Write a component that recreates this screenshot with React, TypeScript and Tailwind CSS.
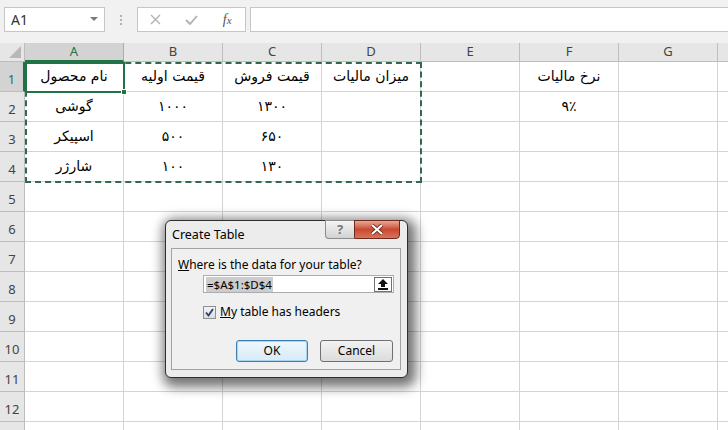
import React from "react";

const COLS = ["A", "B", "C", "D", "E", "F", "G", "H"];

const DATA: Record<number, Record<string, string>> = {
  1: { A: "نام محصول", B: "قیمت اولیه", C: "قیمت فروش", D: "میزان مالیات", F: "نرخ مالیات" },
  2: { A: "گوشی", B: "۱۰۰۰", C: "۱۳۰۰", F: "۹٪" },
  3: { A: "اسپیکر", B: "۵۰۰", C: "۶۵۰" },
  4: { A: "شارژر", B: "۱۰۰", C: "۱۳۰" },
};

const uiFont = { fontFamily: '"Noto Sans", "Open Sans", sans-serif' };
const cellFont = { fontFamily: '"DejaVu Sans", "Noto Sans", sans-serif' };

function FormulaBar() {
  return (
    <div className="flex h-[43px] items-start bg-[#f1f1f1] pt-[7px]" style={uiFont}>
      <div className="ml-[4px] flex h-[25px] w-[101px] items-center justify-between border border-[#c6c6c6] bg-white pl-[6px] pr-[6px]">
        <span className="text-[14px] text-[#333]">A1</span>
        <svg width="8" height="5" viewBox="0 0 8 5">
          <polygon points="0,0 8,0 4,4" fill="#7a7a7a" />
        </svg>
      </div>
      <div className="flex h-[25px] w-[32px] flex-col items-center justify-center gap-[2px]">
        <span className="h-[2px] w-[2px] bg-[#b4b4b4]" />
        <span className="h-[2px] w-[2px] bg-[#b4b4b4]" />
        <span className="h-[2px] w-[2px] bg-[#b4b4b4]" />
      </div>
      <div className="flex h-[25px] w-[109px] items-center border border-[#c6c6c6] bg-white">
        <div className="flex w-[36px] justify-center">
          <svg width="11" height="11" viewBox="0 0 11 11">
            <path d="M1 1 L10 10 M10 1 L1 10" stroke="#b0b0b0" strokeWidth="1.3" />
          </svg>
        </div>
        <div className="flex w-[36px] justify-center">
          <svg width="13" height="10" viewBox="0 0 13 10">
            <path d="M1 5 L5 9 L12 1" stroke="#b0b0b0" strokeWidth="1.8" fill="none" />
          </svg>
        </div>
        <div className="flex w-[36px] justify-center">
          <span
            className="text-[14px] italic text-[#555]"
            style={{ fontFamily: '"Liberation Serif", serif' }}
          >
            f<span className="text-[11px]">x</span>
          </span>
        </div>
      </div>
      <div className="ml-[4px] h-[25px] flex-1 border border-r-0 border-[#c6c6c6] bg-white" />
    </div>
  );
}

function HeaderRow() {
  return (
    <div className="flex h-[19px]" style={uiFont}>
      <div className="flex w-[25px] shrink-0 items-end justify-end border-r border-b border-[#bdbdbd] bg-[#e6e6e6] pb-[3px] pr-[3px]">
        <svg width="12" height="12" viewBox="0 0 12 12">
          <polygon points="12,0 12,12 0,12" fill="#b8b8b8" />
        </svg>
      </div>
      {COLS.map((c) => (
        <div
          key={c}
          className={
            c === "A"
              ? "flex w-[99px] shrink-0 items-center justify-center border-r border-b-2 border-r-[#ababab] border-b-[#217346] bg-[#d3d3d3] text-[13px] text-[#217346]"
              : "flex w-[99px] shrink-0 items-center justify-center border-r border-b border-[#bdbdbd] bg-[#e6e6e6] text-[13px] text-[#444]"
          }
        >
          {c === "H" ? "" : c}
        </div>
      ))}
    </div>
  );
}

function SheetRow({ n }: { n: number }) {
  const row = DATA[n] || {};
  return (
    <div className="flex h-[30px]">
      <div
        className={
          n === 1
            ? "flex w-[25px] shrink-0 items-center justify-center border-r-2 border-b border-r-[#217346] border-b-[#bdbdbd] bg-[#d3d3d3] pt-[6px] text-[13px] text-[#217346]"
            : "flex w-[25px] shrink-0 items-center justify-center border-r border-b border-[#bdbdbd] bg-[#e6e6e6] pt-[6px] text-[13px] text-[#444]"
        }
        style={uiFont}
      >
        {n > 12 ? "" : n}
      </div>
      {COLS.map((c) => (
        <div
          key={c}
          className="flex w-[99px] shrink-0 items-center justify-center border-r border-b border-[#d4d4d4] text-[14px] text-black"
          style={cellFont}
        >
          {row[c] || ""}
        </div>
      ))}
    </div>
  );
}

function CreateTableDialog() {
  return (
    <div
      className="absolute left-[165px] top-[220px] h-[158px] w-[243px] rounded-[6px] border border-[#2e2e2e] bg-[#ececec] shadow-[3px_4px_12px_5px_rgba(0,0,0,0.55)]"
      style={uiFont}
    >
      <div className="absolute right-[7px] top-[-1px] flex h-[19px]">
        <div className="flex w-[29px] items-center justify-center rounded-bl-[4px] border border-r-0 border-[#8c8c8c] bg-linear-to-b from-[#f5f5f5] to-[#d2d2d2] text-[13px] font-bold text-[#777]">
          ?
        </div>
        <div className="flex w-[46px] items-center justify-center rounded-br-[4px] border border-[#6e2a1f] bg-linear-to-b from-[#e8a797] via-[#c9482f] to-[#d9735c]">
          <svg width="14" height="11" viewBox="0 0 14 11">
            <path d="M2 1 L12 10 M12 1 L2 10" stroke="#5a1a10" strokeWidth="3.6" />
            <path d="M2 1 L12 10 M12 1 L2 10" stroke="#ffffff" strokeWidth="2.2" />
          </svg>
        </div>
      </div>
      <div className="flex h-[27px] items-center pl-[6px] pt-[1px] text-[12.5px] text-black">
        Create Table
      </div>
      <div className="ml-[5px] h-[122px] w-[230px] border border-[#a3a3a3] bg-[#f0f0f0] px-[6px] pt-[8px]">
        <div className="h-[16px] text-[12px] leading-[16px] text-black">
          <span className="underline">W</span>here is the data for your table?
        </div>
        <div className="ml-[25px] mt-[2px] flex h-[18px] w-[191px] items-center justify-between border border-[#abadb3] bg-white pl-[2px]">
          <span className="bg-[#cdcdcd] px-[1px] text-[11.5px] leading-[15px] text-black">=$A$1:$D$4</span>
          <div className="mr-[1px] flex h-[15px] w-[18px] items-center justify-center border border-[#707070] bg-white">
            <svg width="10" height="11" viewBox="0 0 10 11">
              <polygon points="5,0 10,5 7,5 7,8 3,8 3,5 0,5" fill="#111" />
              <rect x="0" y="9" width="10" height="2" fill="#111" />
            </svg>
          </div>
        </div>
        <div className="ml-[25px] mt-[12px] flex h-[14px] items-center gap-[4px]">
          <div className="flex h-[13px] w-[13px] items-center justify-center border border-[#8e8f8f] bg-linear-to-b from-[#f2f2f2] to-[#dedede]">
            <svg width="9" height="9" viewBox="0 0 9 9">
              <path d="M1 4.5 L3.5 7.5 L8 1" stroke="#243f78" strokeWidth="1.8" fill="none" />
            </svg>
          </div>
          <span className="text-[12px] text-black">
            <span className="underline">M</span>y table has headers
          </span>
        </div>
        <div className="ml-[58px] mt-[21px] flex gap-[12px]">
          <div className="flex h-[22px] w-[72px] items-center justify-center rounded-[3px] border border-[#3c7fb1] bg-linear-to-b from-[#eef7fc] to-[#d7ebf7] text-[12px] text-black shadow-[inset_0_0_0_1px_#a8d4f0]">
            OK
          </div>
          <div className="flex h-[22px] w-[73px] items-center justify-center rounded-[3px] border border-[#707070] bg-linear-to-b from-[#f2f2f2] to-[#dcdcdc] text-[12px] text-black">
            Cancel
          </div>
        </div>
      </div>
    </div>
  );
}

export default function App() {
  const rows = Array.from({ length: 13 }, (_, i) => i + 1);
  return (
    <div className="relative h-[430px] w-[728px] overflow-hidden bg-white">
      <FormulaBar />
      <HeaderRow />
      <div className="flex flex-col">
        {rows.map((n) => (
          <SheetRow key={n} n={n} />
        ))}
      </div>

      {/* copy marquee around A1:D4 */}
      <div className="pointer-events-none absolute left-[25px] top-[62px] h-[121px] w-[397px] border-2 border-dashed border-[#2f6b4a]" />
      {/* active cell */}
      <div className="pointer-events-none absolute left-[25px] top-[62px] h-[31px] w-[100px] border-2 border-[#217346]" />
      <div className="pointer-events-none absolute left-[121px] top-[89px] h-[6px] w-[6px] border border-white bg-[#217346]" />

      <CreateTableDialog />
    </div>
  );
}
